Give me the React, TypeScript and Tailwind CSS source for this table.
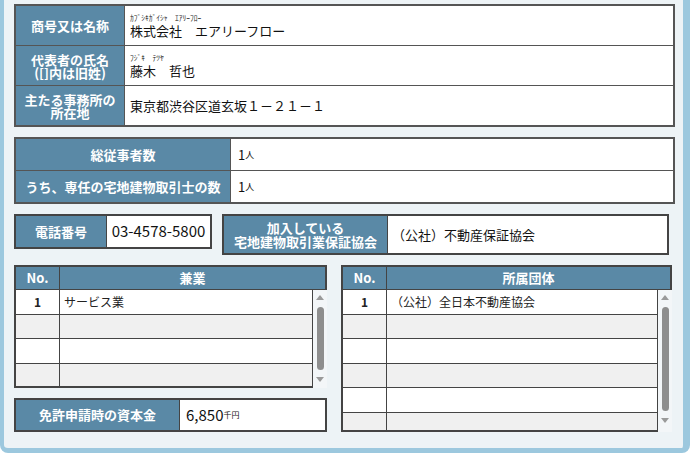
import clsx from "clsx";
import type { ReactNode } from "react";

const font = "font-['Noto_Sans_CJK_JP','Noto_Sans',sans-serif]";

function Label({ children, className }: { children: ReactNode; className?: string }) {
  return (
    <div
      className={clsx(
        "flex flex-col items-center justify-center bg-[#5a89a6] text-center text-[13px] font-bold leading-[14px] text-white",
        className
      )}
    >
      {children}
    </div>
  );
}

function Scrollbar({ thumb }: { thumb: string }) {
  return (
    <div className="flex w-[14px] flex-col items-center bg-[#f3f6f8] pt-[5px]">
      <div className="h-0 w-0 border-x-[4px] border-b-[5px] border-x-transparent border-b-[#9a9a9a]" />
      <div className={clsx("mt-[7px] w-[7px] rounded-full bg-[#8e8e8e]", thumb)} />
      <div className="mt-[7px] h-0 w-0 border-x-[4px] border-t-[5px] border-x-transparent border-t-[#9a9a9a]" />
    </div>
  );
}

function ListTable({
  title,
  rows,
  width,
  bodyHeight,
  thumb,
}: {
  title: string;
  rows: string[];
  width: string;
  bodyHeight: string;
  thumb: string;
}) {
  return (
    <div className={clsx("flex flex-col", width)}>
      {/* Header */}
      <div className="flex h-[25px] border-2 border-b border-[#444] bg-[#5a89a6] text-[13px] font-bold text-white">
        <div className="flex w-[44px] items-center justify-center border-r border-[#444]">No.</div>
        <div className="flex flex-1 items-center justify-center">{title}</div>
      </div>
      {/* Body */}
      <div className={clsx("flex overflow-hidden", bodyHeight)}>
        <div className="flex-1 overflow-hidden border-b-2 border-l-2 border-r border-[#444]">
          {rows.map((r, i) => (
            <div
              key={i}
              className={clsx(
                "flex h-[24.5px] border-b border-[#444] text-[12px] text-[#222]",
                i % 2 === 0 ? "bg-white" : "bg-[#f0f0f0]"
              )}
            >
              <div className="flex w-[44px] shrink-0 items-center justify-center border-r border-[#444] font-bold">
                {i === 0 ? "1" : ""}
              </div>
              <div className="flex items-center pl-[4px]">{r}</div>
            </div>
          ))}
        </div>
        <Scrollbar thumb={thumb} />
      </div>
    </div>
  );
}

export default function App() {
  return (
    <div className={clsx("h-[455px] w-[690px] bg-white", font)}>
      <div className="h-[453px] rounded-b-[8px] border-b-[5px] border-l-[4px] border-r-[7px] border-[#9cc8de] bg-[#edf3f6] pl-[10px] pt-[4px]">
        {/* 商号・代表者・所在地 */}
        <div className="w-[661px] border-2 border-[#555] bg-white">
          <div className="flex h-[40px] border-b border-[#555]">
            <Label className="w-[109px] border-r border-[#555]">商号又は名称</Label>
            <div className="flex flex-col justify-center pl-[5px]">
              <div className="text-[7.5px] leading-[9px] text-[#222]">ｶﾌﾞｼｷｶﾞｲｼｬ　ｴｱﾘｰﾌﾛｰ</div>
              <div className="text-[13px] leading-[17px] text-[#111]">株式会社　エアリーフロー</div>
            </div>
          </div>
          <div className="flex h-[40px] border-b border-[#555]">
            <Label className="w-[109px] border-r border-[#555]">
              <span className="leading-[13px]">代表者の氏名</span>
              <span className="leading-[13px]">([]内は旧姓)</span>
            </Label>
            <div className="flex flex-col justify-center pl-[5px]">
              <div className="text-[7.5px] leading-[9px] text-[#222]">ﾌｼﾞｷ　ﾃﾂﾔ</div>
              <div className="text-[13px] leading-[17px] text-[#111]">藤木　哲也</div>
            </div>
          </div>
          <div className="flex h-[39px]">
            <Label className="w-[109px] border-r border-[#555]">
              <span className="leading-[13px]">主たる事務所の</span>
              <span className="leading-[13px]">所在地</span>
            </Label>
            <div className="flex items-center pl-[5px] text-[13px] text-[#111]">東京都渋谷区道玄坂１－２１－１</div>
          </div>
        </div>

        {/* 従事者数 */}
        <div className="mt-[10px] w-[661px] border-2 border-[#555] bg-white">
          <div className="flex h-[32px] border-b border-[#555]">
            <Label className="w-[215px] border-r border-[#555]">総従事者数</Label>
            <div className="flex items-center pl-[7px] text-[13px] text-[#111]">
              1<span className="text-[9px]">人</span>
            </div>
          </div>
          <div className="flex h-[31px]">
            <Label className="w-[215px] border-r border-[#555]">うち、専任の宅地建物取引士の数</Label>
            <div className="flex items-center pl-[7px] text-[13px] text-[#111]">
              1<span className="text-[9px]">人</span>
            </div>
          </div>
        </div>

        {/* 電話番号・保証協会 */}
        <div className="mt-[10px] flex items-start gap-[10px]">
          <div className="flex h-[35px] w-[198px] border-2 border-[#444] bg-white">
            <Label className="w-[91px] border-r border-[#444]">電話番号</Label>
            <div className="flex flex-1 items-center justify-center text-[15px] text-[#111]">03-4578-5800</div>
          </div>
          <div className="flex h-[41px] w-[447px] border-2 border-[#444] bg-white">
            <Label className="w-[164px] border-r border-[#444]">
              <span className="leading-[14px]">加入している</span>
              <span className="leading-[14px]">宅地建物取引業保証協会</span>
            </Label>
            <div className="flex items-center pl-[4px] text-[13px] text-[#111]">（公社）不動産保証協会</div>
          </div>
        </div>

        {/* 兼業・所属団体 */}
        <div className="mt-[10px] flex items-start gap-[14px]">
          <div className="flex flex-col gap-[10px]">
            <ListTable
              title="兼業"
              rows={["サービス業", "", "", ""]}
              width="w-[313px]"
              bodyHeight="h-[98px]"
              thumb="h-[63px]"
            />
            <div className="flex h-[34px] w-[313px] border-2 border-[#444] bg-white">
              <Label className="w-[164px] border-r border-[#444]">免許申請時の資本金</Label>
              <div className="flex items-center pl-[6px] text-[15px] text-[#111]">
                6,850<span className="text-[8px]">千円</span>
              </div>
            </div>
          </div>
          <ListTable
            title="所属団体"
            rows={["（公社）全日本不動産協会", "", "", "", "", ""]}
            width="w-[331px]"
            bodyHeight="h-[142px]"
            thumb="h-[104px]"
          />
        </div>
      </div>
    </div>
  );
}
